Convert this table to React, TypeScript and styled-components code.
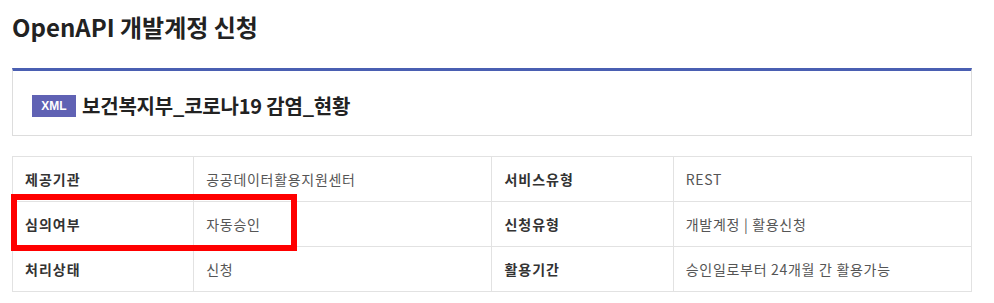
import React from "react";
import styled, { createGlobalStyle } from "styled-components";

const GlobalStyle = createGlobalStyle`
  body {
    margin: 0;
    background: #fff;
    font-family: "Noto Sans CJK KR", "Noto Sans", sans-serif;
  }
`;

const rows = [
  ["제공기관", "공공데이터활용지원센터", "서비스유형", "REST"],
  ["심의여부", "자동승인", "신청유형", "개발계정 | 활용신청"],
  ["처리상태", "신청", "활용기간", "승인일로부터 24개월 간 활용가능"],
];

const App = () => {
  return (
    <Page>
      <GlobalStyle />
      <PageTitle>OpenAPI 개발계정 신청</PageTitle>

      <ApiPanel>
        <Badge>XML</Badge>
        <ApiName>보건복지부_코로나19 감염_현황</ApiName>
      </ApiPanel>

      <TableWrap>
        <InfoTable>
          <colgroup>
            <col style={{ width: "18.9%" }} />
            <col style={{ width: "31.1%" }} />
            <col style={{ width: "18.9%" }} />
            <col style={{ width: "31.1%" }} />
          </colgroup>
          <tbody>
            {rows.map((r, i) => (
              <tr key={i}>
                <Th>{r[0]}</Th>
                <Td>{r[1]}</Td>
                <Th>{r[2]}</Th>
                <Td>{r[3]}</Td>
              </tr>
            ))}
          </tbody>
        </InfoTable>
        {/* annotation box */}
        <Highlight />
      </TableWrap>
    </Page>
  );
};

export default App;

const Page = styled.div`
  width: 960px;
  padding: 0 12px;
`;

const PageTitle = styled.h2`
  margin: 0;
  padding-top: 11px;
  height: 57px;
  box-sizing: border-box;
  font-size: 24px;
  font-weight: 700;
  color: #222;
  letter-spacing: 0;
  line-height: 32px;
`;

const ApiPanel = styled.div`
  height: 68px;
  box-sizing: border-box;
  border: 1px solid #dddddd;
  border-top: 3px solid #4a5fb2;
  display: flex;
  align-items: center;
  padding: 5px 19px 0;
  margin-top: 11px;
  gap: 6px;
`;

const Badge = styled.span`
  width: 44px;
  height: 22px;
  background-color: #6062b4;
  color: #fff;
  font-size: 12px;
  font-weight: 700;
  display: flex;
  align-items: center;
  justify-content: center;
  font-family: "Liberation Sans", Arial, sans-serif;
`;

const ApiName = styled.span`
  font-size: 20px;
  font-weight: 700;
  color: #222;
  letter-spacing: -0.2px;
`;

const TableWrap = styled.div`
  position: relative;
  margin-top: 20px;
`;

const InfoTable = styled.table`
  width: 100%;
  border-collapse: collapse;
  table-layout: fixed;
  border: 1px solid #dddddd;
`;

const Th = styled.th`
  height: 44px;
  border: 1px solid #e2e2e2;
  padding: 0 12px;
  text-align: left;
  font-size: 14px;
  font-weight: 700;
  color: #333;
  letter-spacing: 1px;
`;

const Td = styled.td`
  height: 44px;
  border: 1px solid #e2e2e2;
  padding: 0 12px;
  font-size: 14px;
  color: #555;
  letter-spacing: 0.7px;
`;

const Highlight = styled.div`
  position: absolute;
  left: -1px;
  top: 38px;
  width: 286px;
  height: 57px;
  box-sizing: border-box;
  border: 6px solid #ff0000;
  pointer-events: none;
`;
